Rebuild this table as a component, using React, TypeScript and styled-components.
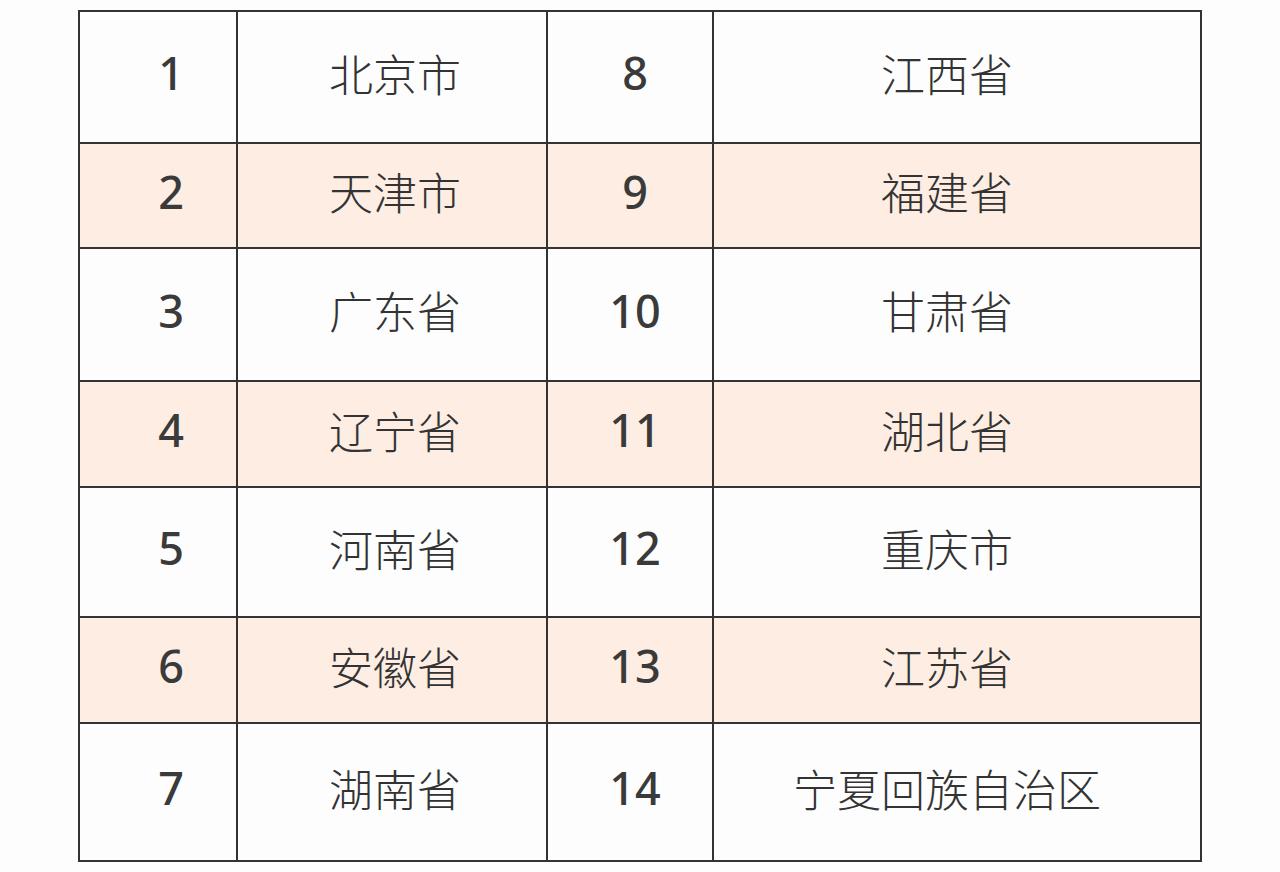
import { createGlobalStyle, styled } from "styled-components";

const rows = [
  { left: ["1", "北京市"], right: ["8", "江西省"], height: 130, shaded: false },
  { left: ["2", "天津市"], right: ["9", "福建省"], height: 103, shaded: true },
  { left: ["3", "广东省"], right: ["10", "甘肃省"], height: 131, shaded: false },
  { left: ["4", "辽宁省"], right: ["11", "湖北省"], height: 104, shaded: true },
  { left: ["5", "河南省"], right: ["12", "重庆市"], height: 128, shaded: false },
  { left: ["6", "安徽省"], right: ["13", "江苏省"], height: 104, shaded: true },
  { left: ["7", "湖南省"], right: ["14", "宁夏回族自治区"], height: 136, shaded: false },
];

export default function App() {
  return (
    <>
      <GlobalStyle />
      <Page>
        <Table style={{ gridTemplateRows: rows.map((r) => `${r.height}px`).join(" ") }}>
          {rows.map((row) => (
            <Row key={row.left[0]}>
              <NumCell $shaded={row.shaded} $shift={13}>{row.left[0]}</NumCell>
              <NameCell $shaded={row.shaded} $shift={3}>{row.left[1]}</NameCell>
              <NumCell $shaded={row.shaded} $shift={5}>{row.right[0]}</NumCell>
              <NameCell $shaded={row.shaded} $shift={-10}>{row.right[1]}</NameCell>
            </Row>
          ))}
        </Table>
      </Page>
    </>
  );
}

const GlobalStyle = createGlobalStyle`
  body {
    margin: 0;
    background: #fdfdfd;
    font-family: "Noto Sans", "Noto Sans CJK SC", sans-serif;
  }
`;

const Page = styled.div`
  padding: 10px 0 0 78px;
`;

const Table = styled.div`
  display: grid;
  grid-template-columns: 156px 308px 164px 486px;
  gap: 2px;
  padding: 2px;
  width: 1124px;
  box-sizing: border-box;
  background: #333333;
`;

const Row = styled.div`
  display: contents;
`;

const Cell = styled.div<{ $shaded: boolean; $shift: number }>`
  display: flex;
  align-items: center;
  justify-content: center;
  background: ${(p) => (p.$shaded ? "#fdede3" : "#fdfdfd")};
  color: #3a3a3a;
  padding-bottom: 9px;
  padding-left: ${(p) => Math.max(p.$shift, 0) * 2}px;
  padding-right: ${(p) => Math.max(-p.$shift, 0) * 2}px;
  box-sizing: border-box;
`;

const NumCell = styled(Cell)`
  font-family: "Noto Sans", sans-serif;
  font-size: 45px;
  font-weight: 500;
`;

const NameCell = styled(Cell)`
  font-family: "Noto Sans CJK SC", sans-serif;
  font-size: 44px;
  font-weight: 300;
  color: #333333;
`;
